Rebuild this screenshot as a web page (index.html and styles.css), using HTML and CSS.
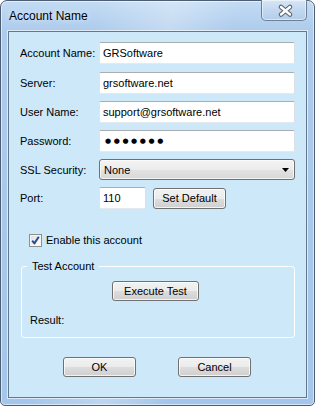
FILE: index.html
```html
<!DOCTYPE html>
<html>
<head>
<meta charset="utf-8">
<title>Account Name</title>
<link rel="stylesheet" href="styles.css">
</head>
<body>
<div class="window">
  <div class="titlebar">
    <span class="title">Account Name</span>
    <button class="close" aria-label="Close">
      <svg width="46" height="20" viewBox="0 0 46 20">
        <path d="M20 7 L29 14.5 M29 7 L20 14.5" stroke="#5a6470" stroke-width="4.6" stroke-linecap="round" fill="none"/>
        <path d="M20 7 L29 14.5 M29 7 L20 14.5" stroke="#fff" stroke-width="2.4" stroke-linecap="round" fill="none"/>
      </svg>
    </button>
  </div>
  <div class="client">
    <div class="row">
      <span class="label">Account Name:</span>
      <div class="field">GRSoftware</div>
    </div>
    <div class="row r2">
      <span class="label">Server:</span>
      <div class="field">grsoftware.net</div>
    </div>
    <div class="row">
      <span class="label">User Name:</span>
      <div class="field">support@grsoftware.net</div>
    </div>
    <div class="row">
      <span class="label">Password:</span>
      <div class="field"><span class="dots">●●●●●●●</span></div>
    </div>
    <div class="row combo-row">
      <span class="label">SSL Security:</span>
      <div class="combo">
        <span>None</span>
        <svg class="arrow" width="7" height="4" viewBox="0 0 7 4"><path d="M0 0 H7 L3.5 4 Z" fill="#000"/></svg>
      </div>
    </div>
    <div class="row">
      <span class="label">Port:</span>
      <div class="field port">110</div>
      <button class="btn setdef">Set Default</button>
    </div>
    <label class="check-row">
      <span class="checkbox">
        <svg width="11" height="11" viewBox="0 0 11 11"><path d="M2.2 5.6 L4.4 8.4 L8.8 1.8" stroke="#2a4b8d" stroke-width="2" fill="none" stroke-linejoin="round"/></svg>
      </span>
      <span>Enable this account</span>
    </label>
    <fieldset class="group">
      <legend>Test Account</legend>
      <button class="btn exec">Execute Test</button>
      <div class="result">Result:</div>
    </fieldset>
    <div class="actions">
      <button class="btn ok">OK</button>
      <button class="btn cancel">Cancel</button>
    </div>
  </div>
</div>
</body>
</html>
```
FILE: styles.css
```css
* { box-sizing: border-box; }
html, body { margin: 0; padding: 0; }
body {
  width: 315px;
  height: 406px;
  overflow: hidden;
  background: #fff;
  font-family: "Liberation Sans", Arial, sans-serif;
  font-size: 11px;
  color: #000;
}
.window {
  width: 315px;
  height: 406px;
  border: 1px solid #4d5e74;
  border-radius: 7px 7px 5px 5px;
  padding: 0 7px 7px;
  display: flex;
  flex-direction: column;
  background:
    linear-gradient(100deg, rgba(255,255,255,0) 25%, rgba(255,255,255,.28) 45%, rgba(255,255,255,0) 62%),
    linear-gradient(180deg, #c3dcf4 0, #adcbec 30px, #a4c6ea 100%);
  box-shadow: inset 0 0 0 1px rgba(255,255,255,.55);
}
.titlebar {
  height: 30px;
  display: flex;
  align-items: center;
}
.title {
  padding-left: 1px;
  font-size: 12px;
  color: #000;
  text-shadow: 0 0 6px rgba(255,255,255,.8);
}
.close {
  margin-left: auto;
  align-self: flex-start;
  margin-top: -1px;
  width: 46px;
  height: 21px;
  padding: 0;
  border: 1px solid #6e7f95;
  border-top: none;
  border-radius: 0 0 5px 5px;
  background: linear-gradient(180deg, #d6e6f6 0, #c2d8f0 50%, #b3cdeb 100%);
  box-shadow: inset 0 0 0 1px rgba(255,255,255,.5);
  display: block;
}
.close svg { display: block; margin-top: -1px; margin-left: -1px; }
.client {
  flex: 1;
  border: 1px solid #62788f;
  box-shadow: 0 0 0 1px rgba(255,255,255,.6);
  background: #cce8f9;
  padding: 10px 11px 0 11px;
  display: flex;
  flex-direction: column;
  align-items: flex-start;
}
.row {
  display: flex;
  align-items: center;
  height: 22px;
  margin-top: 7px;
}
.row:first-child { margin-top: 0; }
.row.r2 { margin-top: 8px; }
.row.combo-row { height: 21px; }
.label { width: 79px; }
.field {
  width: 196px;
  height: 22px;
  background: #fff;
  border: 1px solid;
  border-color: #abadb3 #dbdfe6 #e3e9ef #e2e3ea;
  border-radius: 2px;
  padding: 0 3px;
  display: flex;
  align-items: center;
  white-space: nowrap;
}
.field.port { width: 47px; }
.dots {
  font-family: "DejaVu Sans", sans-serif;
  font-size: 7px;
  letter-spacing: 2.6px;
  padding-left: 2px;
}
.combo {
  width: 196px;
  height: 21px;
  border: 1px solid #707070;
  border-radius: 3px;
  background: linear-gradient(180deg, #f3f3f3 0, #ececec 50%, #e2e2e2 51%, #d8d8d8 100%);
  box-shadow: inset 0 0 0 1px rgba(255,255,255,.7);
  display: flex;
  align-items: center;
  justify-content: space-between;
  padding: 0 5px 0 4px;
}
.arrow { display: block; }
.btn {
  height: 20px;
  padding: 0;
  border: 1px solid #707070;
  border-radius: 3px;
  background: linear-gradient(180deg, #f2f2f2 0, #ebebeb 50%, #dddddd 51%, #cfcfcf 100%);
  box-shadow: inset 0 0 0 1px rgba(255,255,255,.75);
  font-family: "Liberation Sans", Arial, sans-serif;
  font-size: 11px;
  color: #000;
  display: flex;
  align-items: center;
  justify-content: center;
}
.setdef { margin-left: 7px; width: 73px; height: 21px; }
.check-row {
  display: flex;
  align-items: center;
  gap: 4px;
  height: 13px;
  margin-top: 25px;
  padding-left: 9px;
  line-height: 13px;
}
.checkbox {
  width: 13px;
  height: 13px;
  border: 1px solid #8e8f8f;
  background: linear-gradient(135deg, #dcdcdc 0, #f4f4f4 60%, #ffffff 100%);
  box-shadow: inset 0 0 0 1px #f6f6f6;
  display: flex;
  align-items: center;
  justify-content: center;
}
.checkbox svg { display: block; }
.group {
  margin: 12px 0 0 1px;
  width: 274px;
  border: 1px solid #fff;
  border-radius: 3px;
  padding: 0 0 10px 0;
  min-width: 0;
}
.group legend {
  margin-left: 5px;
  padding: 0 5px;
  line-height: 14px;
  font-size: 11px;
}
.exec { margin: 8px 0 0 90px; width: 87px; }
.result { margin: 13px 0 0 8px; line-height: 13px; }
.actions {
  display: flex;
  gap: 42px;
  margin-top: 19px;
  padding-left: 43px;
}
.ok, .cancel { width: 73px; }
```
